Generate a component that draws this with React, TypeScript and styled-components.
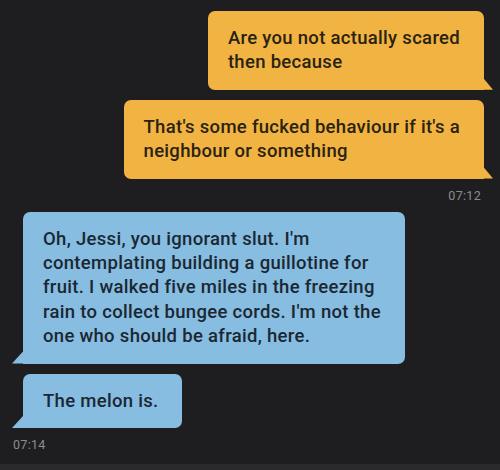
import React from "react";
import styled, { createGlobalStyle, css } from "styled-components";

type Side = "out" | "in";

type Item =
  | { kind: "msg"; side: Side; lines: string[] }
  | { kind: "time"; side: Side; text: string };

const items: Item[] = [
  { kind: "time", side: "in", text: "07:12" },
  { kind: "msg", side: "out", lines: ["Are you not actually scared", "then because"] },
  {
    kind: "msg",
    side: "out",
    lines: ["That's some fucked behaviour if it's a", "neighbour or something"],
  },
  { kind: "time", side: "out", text: "07:12" },
  {
    kind: "msg",
    side: "in",
    lines: [
      "Oh, Jessi, you ignorant slut. I'm",
      "contemplating building a guillotine for",
      "fruit. I walked five miles in the freezing",
      "rain to collect bungee cords. I'm not the",
      "one who should be afraid, here.",
    ],
  },
  { kind: "msg", side: "in", lines: ["The melon is."] },
  { kind: "time", side: "in", text: "07:14" },
];

const GlobalStyle = createGlobalStyle`
  html, body {
    margin: 0;
    padding: 0;
    background: #1e1e20;
  }
  body {
    font-family: Roboto, "Noto Sans", sans-serif;
  }
`;

const Screen = styled.div`
  display: flex;
  flex-direction: column;
  width: 500px;
  height: 470px;
  overflow: hidden;
  background: #1e1e20;
`;

const Thread = styled.div`
  flex: 1;
  min-height: 0;
  display: flex;
  flex-direction: column;
  justify-content: flex-end;
  overflow: hidden;
  padding: 0 16px 11px 12px;
`;

const Row = styled.div<{ $side: Side; $gap: number }>`
  display: flex;
  justify-content: ${(p) => (p.$side === "out" ? "flex-end" : "flex-start")};
  margin-top: ${(p) => p.$gap}px;
  flex-shrink: 0;
`;

const Bubble = styled.div<{ $side: Side }>`
  position: relative;
  width: fit-content;
  padding: 15px 24px 15px 20px;
  font-size: 18.5px;
  font-weight: 500;
  line-height: 24.4px;
  letter-spacing: 0.3px;
  white-space: nowrap;
  border-radius: 7px;

  &::after {
    content: "";
    position: absolute;
    bottom: 0;
    width: 10px;
    height: 12px;
  }

  ${(p) =>
    p.$side === "out"
      ? css`
          background: #f1b443;
          color: #2a2212;
          border-bottom-right-radius: 0;
          &::after {
            right: -9px;
            background: #f1b443;
            clip-path: polygon(0 0, 100% 100%, 0 100%);
          }
        `
      : css`
          margin-left: 11px;
          background: #86bde0;
          color: #1b2733;
          border-bottom-left-radius: 0;
          &::after {
            left: -11px;
            width: 11px;
            background: #86bde0;
            clip-path: polygon(100% 0, 100% 100%, 0 100%);
          }
        `}
`;

const Stamp = styled.div<{ $side: Side }>`
  font-size: 12.5px;
  line-height: 16px;
  color: #8c8c8e;
  letter-spacing: 0.3px;
  padding-right: ${(p) => (p.$side === "out" ? "3px" : "0")};
  padding-left: ${(p) => (p.$side === "in" ? "1px" : "0")};
`;

const Composer = styled.div`
  height: 6px;
  flex-shrink: 0;
  background: #2a2a2c;
`;

const gapFor = (prev: Item | undefined, cur: Item) => {
  if (!prev) return 0;
  if (cur.kind === "time") return 9;
  if (prev.kind === "time") return 8;
  return 10;
};

export default function App() {
  return (
    <>
      <GlobalStyle />
      <Screen>
        <Thread>
          {items.map((it, i) => (
            <Row key={i} $side={it.side} $gap={gapFor(items[i - 1], it)}>
              {it.kind === "msg" ? (
                <Bubble $side={it.side}>
                  {it.lines.map((l, j) => (
                    <div key={j}>{l}</div>
                  ))}
                </Bubble>
              ) : (
                <Stamp $side={it.side}>{it.text}</Stamp>
              )}
            </Row>
          ))}
        </Thread>
        <Composer />
      </Screen>
    </>
  );
}
